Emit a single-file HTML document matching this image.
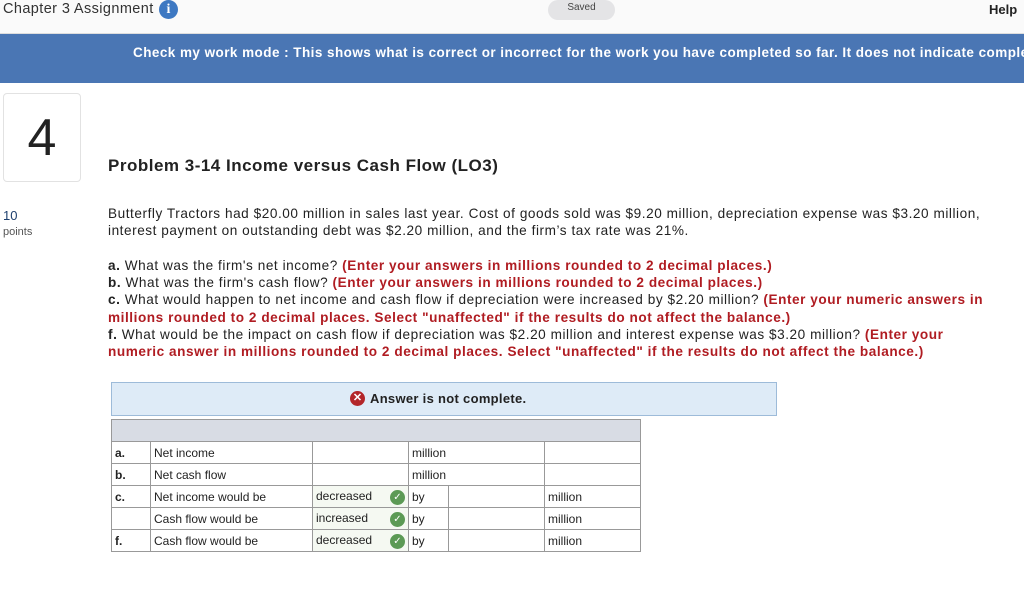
<!DOCTYPE html>
<html><head><meta charset="utf-8"><style>
*{margin:0;padding:0;box-sizing:border-box}
body{width:1024px;height:597px;overflow:hidden;background:#fff;font-family:"Liberation Sans",Arial,sans-serif;color:#222;position:relative}
.abs{position:absolute;white-space:nowrap}
.top{position:absolute;left:0;top:0;width:1024px;height:34px;background:#fafafa;border-bottom:1px solid #ddd}
.banner{position:absolute;left:0;top:34px;width:1024px;height:49px;background:#4a76b4;color:#fff;font-weight:bold;font-size:13.5px;overflow:hidden}
.red{color:#b01c22;font-weight:bold}
p.q{font-size:13.6px;line-height:17.2px;letter-spacing:0.55px}
table{border-collapse:collapse;position:absolute;left:111px;top:419px;font-size:12px}
td{border:1px solid #999;height:22px;padding:0 3px;vertical-align:middle}
.chk{display:inline-block;width:15px;height:15px;border-radius:50%;background:#5c9a55;color:#fff;font-size:10px;line-height:15px;text-align:center;float:right;margin-top:1px}
</style></head><body>
<div class="top"></div>
<div class="abs" style="left:3px;top:1px;font-size:14.5px;color:#333;letter-spacing:0.4px">Chapter 3 Assignment</div>
<div class="abs" style="left:159px;top:0;width:19px;height:19px;border-radius:50%;background:#3d78c2;color:#fff;font-weight:bold;font-size:14px;text-align:center;line-height:19px;font-family:'Liberation Serif',serif">i</div>
<div class="abs" style="left:548px;top:0;width:67px;height:20px;border-radius:10px;background:#e4e4e6;font-size:10px;text-align:center;line-height:16px;color:#444">Saved</div>
<div class="abs" style="left:989px;top:2px;font-size:13px;font-weight:bold">Help</div>
<div class="banner"><div class="abs" style="left:133px;top:11px;letter-spacing:0.45px">Check my work mode : This shows what is correct or incorrect for the work you have completed so far. It does not indicate completion.</div></div>
<div class="abs" style="left:3px;top:93px;width:78px;height:89px;border:1px solid #e2e2e2;border-radius:4px;font-size:52px;text-align:center;line-height:88px;color:#222">4</div>
<div class="abs" style="left:108px;top:156px;font-size:17px;font-weight:bold;letter-spacing:0.5px">Problem 3-14 Income versus Cash Flow (LO3)</div>
<div class="abs" style="left:3px;top:208px;font-size:13px;color:#1d3f6e">10</div>
<div class="abs" style="left:3px;top:226px;font-size:11px;color:#555">points</div>
<div class="abs" style="left:108px;top:205px;width:895px;white-space:normal"><p class="q">Butterfly Tractors had $20.00 million in sales last year. Cost of goods sold was $9.20 million, depreciation expense was $3.20 million, interest payment on outstanding debt was $2.20 million, and the firm’s tax rate was 21%.</p></div>
<div class="abs" style="left:108px;top:257px;width:895px;white-space:normal"><p class="q"><b>a.</b> What was the firm's net income? <span class="red">(Enter your answers in millions rounded to 2 decimal places.)</span><br><b>b.</b> What was the firm's cash flow? <span class="red">(Enter your answers in millions rounded to 2 decimal places.)</span><br><b>c.</b> What would happen to net income and cash flow if depreciation were increased by $2.20 million? <span class="red">(Enter your numeric answers in millions rounded to 2 decimal places. Select "unaffected" if the results do not affect the balance.)</span><br><b>f.</b> What would be the impact on cash flow if depreciation was $2.20 million and interest expense was $3.20 million? <span class="red">(Enter your numeric answer in millions rounded to 2 decimal places. Select "unaffected" if the results do not affect the balance.)</span></p></div>
<div class="abs" style="left:111px;top:382px;width:666px;height:34px;background:#deebf7;border:1px solid #9dbbd9"></div>
<div class="abs" style="left:350px;top:391px;width:15px;height:15px;border-radius:50%;background:#b3262a;color:#fff;font-size:11px;text-align:center;line-height:15px;font-weight:bold">✕</div>
<div class="abs" style="left:370px;top:391px;font-size:13px;font-weight:bold;letter-spacing:0.3px">Answer is not complete.</div>
<table>
<colgroup><col style="width:39px"><col style="width:162px"><col style="width:96px"><col style="width:40px"><col style="width:96px"><col style="width:96px"></colgroup>
<tr><td colspan="6" style="background:#d8dce4"></td></tr>
<tr><td><b>a.</b></td><td>Net income</td><td></td><td colspan="2">million</td><td></td></tr>
<tr><td><b>b.</b></td><td>Net cash flow</td><td></td><td colspan="2">million</td><td></td></tr>
<tr><td><b>c.</b></td><td>Net income would be</td><td style="background:#f5f9f2">decreased<span class="chk">✓</span></td><td>by</td><td></td><td>million</td></tr>
<tr><td></td><td>Cash flow would be</td><td style="background:#f5f9f2">increased<span class="chk">✓</span></td><td>by</td><td></td><td>million</td></tr>
<tr><td><b>f.</b></td><td>Cash flow would be</td><td style="background:#f5f9f2">decreased<span class="chk">✓</span></td><td>by</td><td></td><td>million</td></tr>
</table>
</body></html>
